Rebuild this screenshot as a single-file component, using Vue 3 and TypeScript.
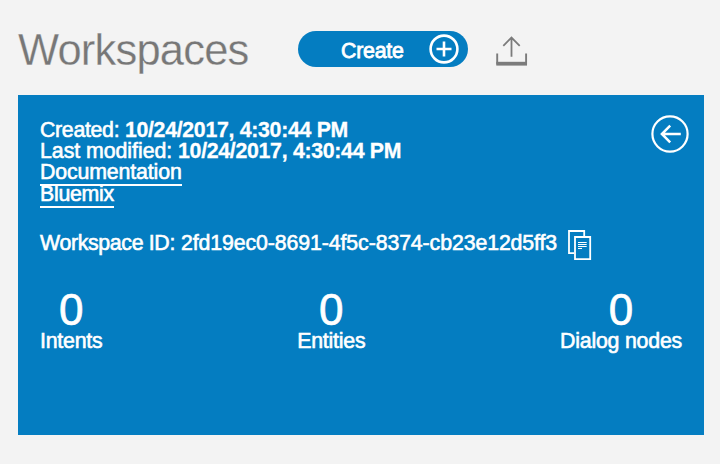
<script setup lang="ts">
interface Stat {
  value: number
  label: string
}

const workspaceId = '2fd19ec0-8691-4f5c-8374-cb23e12d5ff3'
const created = '10/24/2017, 4:30:44 PM'
const modified = '10/24/2017, 4:30:44 PM'
const stats: Stat[] = [
  { value: 0, label: 'Intents' },
  { value: 0, label: 'Entities' },
  { value: 0, label: 'Dialog nodes' },
]
</script>

<template>
  <main class="page">
    <header class="header">
      <h1 class="title">Workspaces</h1>
      <button class="create" type="button">
        <span class="create-label">Create</span>
        <svg class="plus" viewBox="0 0 30 30" fill="none" stroke="#fff">
          <circle cx="15" cy="15" r="13.4" stroke-width="2.6" />
          <path d="M15 7.5v15M7.5 15h15" stroke-width="2.6" />
        </svg>
      </button>
      <button class="upload" type="button" aria-label="Import workspace">
        <svg viewBox="0 0 32 30" fill="none" stroke="#7b7b7b">
          <path d="M15.5 20.7V1.5M7.3 9.8l8.2-8.2 8.2 8.2" stroke-width="1.8" />
          <path d="M1.2 17.5v11M30.1 17.5v11" stroke-width="1.9" />
          <path d="M.3 27.7h30.7" stroke-width="3.8" />
        </svg>
      </button>
    </header>

    <section class="card">
      <div class="top">
        <div class="meta">
          <p class="line"><span class="created">Created: </span><b>{{ created }}</b></p>
          <p class="line"><span class="modified">Last modified: </span><b>{{ modified }}</b></p>
          <a class="link">Documentation</a>
          <a class="link bluemix">Bluemix</a>
        </div>
        <button class="back" type="button" aria-label="Back">
          <svg viewBox="0 0 38 38" fill="none" stroke="#fff">
            <circle cx="19" cy="19" r="17.6" stroke-width="2.2" />
            <path d="M29.8 19H10.5M19.2 10.7L10.9 19l8.3 8.3" stroke-width="2.5" />
          </svg>
        </button>
      </div>

      <div class="id-row">
        <span class="id-label">Workspace ID: </span>
        <span class="id-value">{{ workspaceId }}</span>
        <svg class="copy" viewBox="0 0 24 31" fill="none" stroke="#fff">
          <path d="M6 23.1H1V1h15.2v5" stroke-width="1.8" />
          <path d="M7 7h15.2v22.2H7z" stroke-width="1.8" />
          <path d="M10 12.5h8.7M10 14.5h8.7M10 16.5h8.7M10 18.5h4" stroke-width="1" />
        </svg>
      </div>

      <div class="stats">
        <div v-for="stat in stats" :key="stat.label" class="stat">
          <span class="value">{{ stat.value }}</span>
          <span class="label">{{ stat.label }}</span>
        </div>
      </div>
    </section>
  </main>
</template>

<style>
body {
  background: #f3f3f3;
}
</style>

<style scoped>
.page {
  box-sizing: border-box;
  height: 464px;
  padding: 25px 16px 29px 18px;
  background: #f3f3f3;
  color: #fff;
  font-family: "Liberation Sans", Arial, sans-serif;
  font-size: 21.3px;
  line-height: 21px;
}

button {
  padding: 0;
  border: 0;
  background: none;
  color: inherit;
  font: inherit;
}

svg {
  display: block;
}

.header {
  display: flex;
  height: 70px;
}

.title {
  width: 280px;
  margin: 0;
  color: #777;
  font-size: 43.5px;
  font-weight: 400;
  line-height: 50px;
  letter-spacing: -0.8px;
  -webkit-text-stroke: 0.3px #f3f3f3;
}

.create {
  display: flex;
  align-items: center;
  box-sizing: border-box;
  width: 170px;
  height: 36px;
  margin-top: 6px;
  padding-left: 43px;
  border-radius: 18px;
  background: #047dc1;
}

.create-label {
  width: 88px;
  padding-top: 4px;
  text-align: left;
  letter-spacing: -0.2px;
  -webkit-text-stroke: 0.8px #fff;
}

.plus {
  width: 30px;
  height: 30px;
  margin-top: -1px;
}

.upload {
  width: 32px;
  height: 30px;
  margin: 11px 0 0 28px;
}

.card {
  box-sizing: border-box;
  height: 340px;
  padding: 25px 23px 0 22px;
  background: #047dc1;
}

.top {
  display: flex;
  justify-content: space-between;
  height: 111px;
}

.meta {
  display: flex;
  flex-direction: column;
  align-items: flex-start;
}

.line {
  margin: 0;
  white-space: pre;
}

.created,
.modified,
.link,
.id-row,
.label {
  -webkit-text-stroke: 0.6px #fff;
}

.created {
  letter-spacing: -0.3px;
}

.modified {
  letter-spacing: -0.03px;
}

.line b {
  letter-spacing: -0.3px;
  -webkit-text-stroke: 0.3px #fff;
}

.link {
  height: 22px;
  margin-bottom: -2px;
  border-bottom: 2px solid #fff;
  letter-spacing: -0.12px;
}

.bluemix {
  letter-spacing: -0.25px;
}

.back {
  width: 38px;
  height: 38px;
  margin: -5px -8px 0 0;
}

.back svg {
  width: 38px;
  height: 38px;
}

.id-row {
  display: flex;
  height: 60px;
  white-space: pre;
}

.id-label {
  width: 141px;
  padding-top: 2px;
  letter-spacing: -0.33px;
}

.id-value {
  width: 387px;
  padding-top: 2px;
  letter-spacing: -0.1px;
}

.copy {
  width: 24px;
  height: 31px;
  margin-top: -1px;
  -webkit-text-stroke: 0;
}

.stats {
  display: flex;
  justify-content: space-between;
  margin-right: -1px;
}

.stat {
  display: flex;
  flex-direction: column;
  align-items: center;
}

.value {
  margin-bottom: 2px;
  font-size: 44px;
  line-height: 38px;
  -webkit-text-stroke: 0.7px #fff;
}

.label {
  letter-spacing: -0.2px;
}
</style>
